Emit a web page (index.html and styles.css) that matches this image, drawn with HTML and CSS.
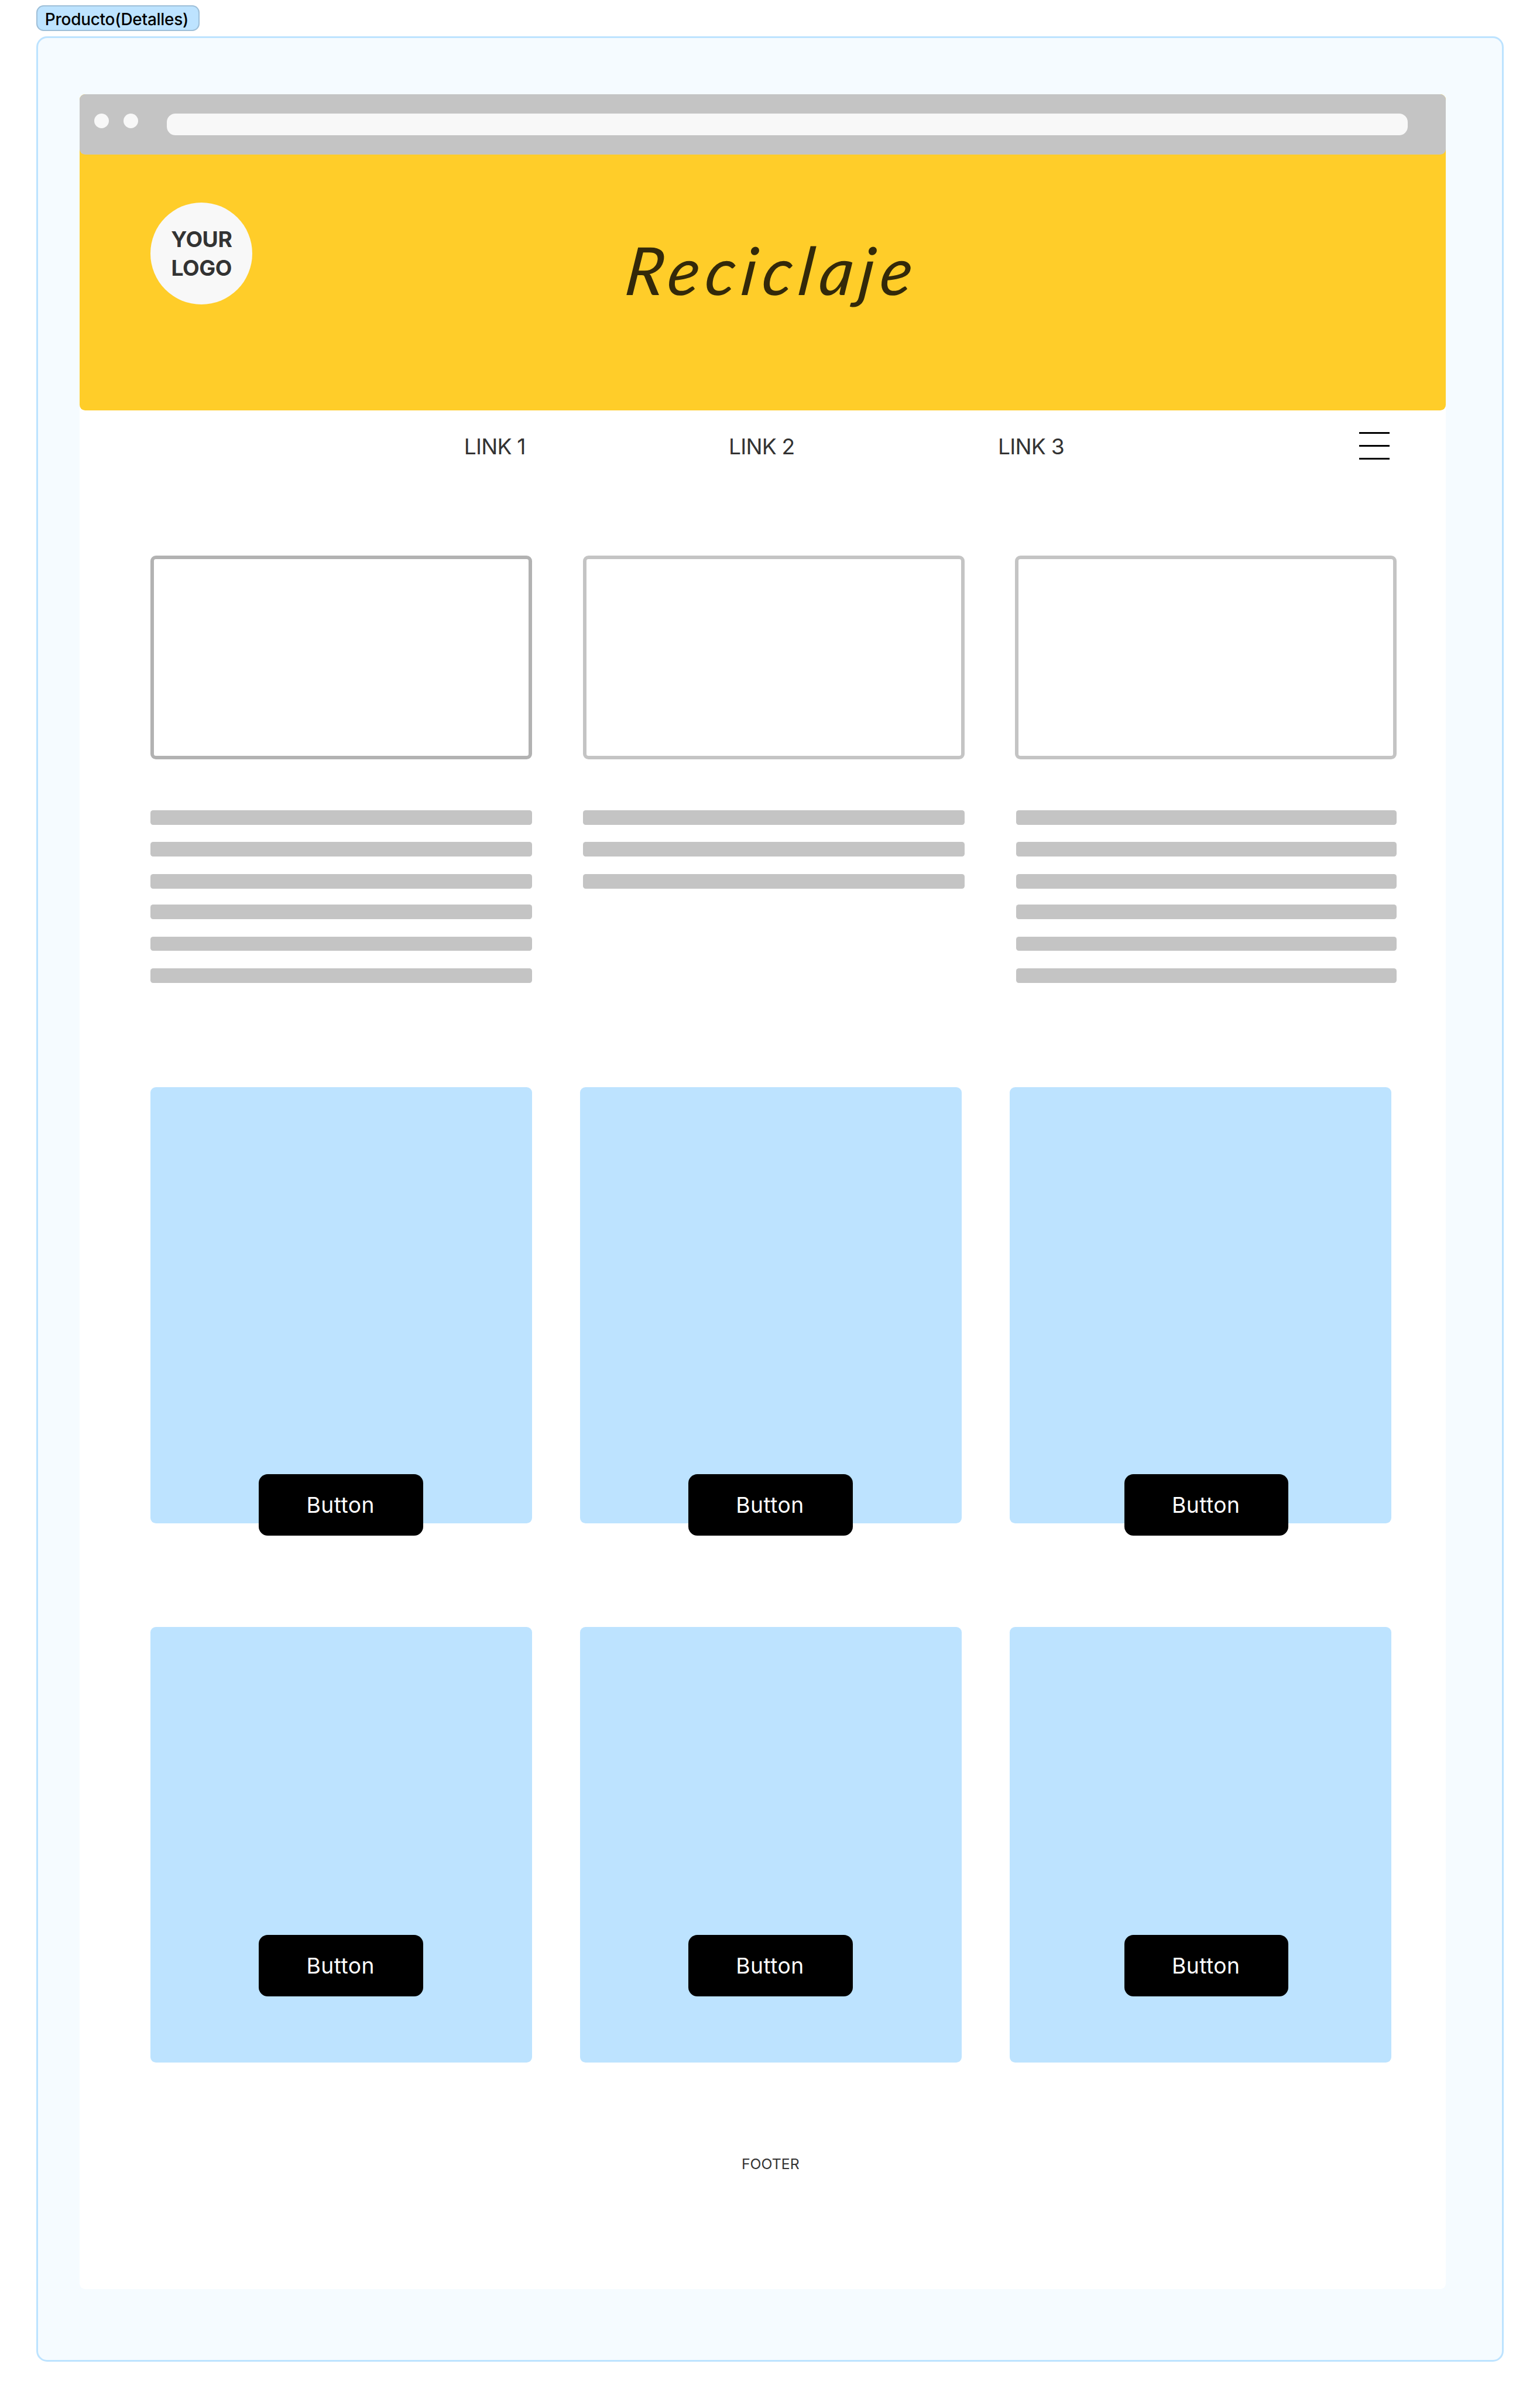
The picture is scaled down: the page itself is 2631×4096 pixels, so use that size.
FILE: index.html
```html
<!DOCTYPE html>
<html lang="es">
<head>
<meta charset="utf-8">
<title>Producto(Detalles)</title>
<link rel="stylesheet" href="styles.css">
</head>
<body>
<div class="tag">Producto(Detalles)</div>
<section class="board">
  <main class="browser">
    <header class="hero">
      <div class="chrome">
        <span class="dot"></span>
        <span class="dot"></span>
        <span class="address"></span>
      </div>
      <div class="banner">
        <div class="logo">YOUR<br>LOGO</div>
        <h1 class="title">Reciclaje</h1>
      </div>
    </header>
    <nav class="nav">
      <a class="link">LINK 1</a>
      <a class="link">LINK 2</a>
      <a class="link">LINK 3</a>
      <span class="burger"><i class="line"></i><i class="line"></i><i class="line"></i></span>
    </nav>
    <section class="details">
      <article class="detail">
        <div class="frame frame-dark"></div>
        <div class="bars"><i class="bar"></i><i class="bar"></i><i class="bar"></i></div>
        <div class="bars"><i class="bar"></i><i class="bar"></i><i class="bar"></i></div>
      </article>
      <article class="detail">
        <div class="frame"></div>
        <div class="bars"><i class="bar"></i><i class="bar"></i><i class="bar"></i></div>
      </article>
      <article class="detail">
        <div class="frame"></div>
        <div class="bars bars-inset"><i class="bar"></i><i class="bar"></i><i class="bar"></i></div>
        <div class="bars bars-inset"><i class="bar"></i><i class="bar"></i><i class="bar"></i></div>
      </article>
    </section>
    <section class="products">
      <article class="product product-low"><button class="button">Button</button></article>
      <article class="product product-low"><button class="button">Button</button></article>
      <article class="product product-low product-shift"><button class="button">Button</button></article>
      <article class="product"><button class="button">Button</button></article>
      <article class="product"><button class="button">Button</button></article>
      <article class="product product-shift"><button class="button">Button</button></article>
    </section>
    <footer class="footer">FOOTER</footer>
  </main>
</section>
</body>
</html>
```
FILE: styles.css
```css
/* 1rem is 100 units of the design canvas */
html {
  font-size: 77.575px;
}

* {
  box-sizing: border-box;
}

body {
  margin: 0;
  height: 100vh;
  padding: 0.12rem 0.8rem 0;
  overflow: hidden;
  background: #fff;
  color: #333;
  font-family: Inter, "Liberation Sans", sans-serif;
}

.tag {
  width: 3.6rem;
  height: 0.56rem;
  margin-bottom: 0.12rem;
  padding-left: 0.165rem;
  border: 2px solid #9ebfd8;
  border-radius: 0.16rem;
  background: #bde3ff;
  color: #000;
  font-size: 0.36rem;
  font-weight: 500;
  letter-spacing: -0.003rem;
  line-height: 0.57rem;
  white-space: nowrap;
}

.board {
  height: 51.2rem;
  padding: 1.24rem 1.24rem 0 0.92rem;
  border: 0.04rem solid #bde3ff;
  border-radius: 0.24rem;
  background: #f5fbff;
}

.browser {
  height: 48.32rem;
  border-radius: 0.12rem;
  background: #fff;
}

.hero {
  height: 6.96rem;
  border-radius: 0.12rem;
  background: #ffcd29;
}

.chrome {
  display: flex;
  height: 1.32rem;
  padding: 0.42rem 0.84rem 0 0.32rem;
  gap: 0.32rem;
  border-radius: 0.12rem;
  background: #c4c4c4;
}

.dot {
  width: 0.32rem;
  height: 0.32rem;
  border-radius: 50%;
  background: #f8f8f8;
}

.address {
  flex: 1;
  height: 0.48rem;
  margin-left: 0.32rem;
  border-radius: 0.19rem;
  background: #f8f8f8;
}

.banner {
  display: flex;
  padding: 1.06rem 0 0 1.56rem;
}

.logo {
  width: 2.24rem;
  height: 2.24rem;
  padding-top: 0.49rem;
  border-radius: 50%;
  background: #f8f8f8;
  font-size: 0.48rem;
  font-weight: 700;
  letter-spacing: -0.006rem;
  line-height: 0.64rem;
  text-align: center;
}

.title {
  margin: 0.58rem 0 0 8.24rem;
  color: #33290a;
  font-family: Lato, "Liberation Sans", sans-serif;
  font-size: 1.46rem;
  font-style: italic;
  font-weight: 400;
  letter-spacing: 0.13rem;
  line-height: 1.8rem;
  transform: skewX(-7deg);
}

.nav {
  display: grid;
  grid-template-columns: 5.83rem 5.93rem 7.95rem 0.68rem;
  height: 3.2rem;
  padding: 0.48rem 0 0 8.46rem;
}

.link {
  font-size: 0.48rem;
  font-weight: 400;
  letter-spacing: -0.01rem;
  line-height: 0.64rem;
  white-space: nowrap;
}

.burger {
  display: flex;
  flex-direction: column;
  gap: 0.24rem;
}

.line {
  height: 0.04rem;
  background: #000;
}

.details {
  display: grid;
  grid-template-columns: repeat(3, 8.4rem);
  gap: 1.12rem;
  height: 11.7rem;
  margin-left: 1.56rem;
  align-items: start;
}

.frame {
  height: 4.48rem;
  margin-bottom: 1.12rem;
  border: 0.08rem solid #c4c4c4;
  border-radius: 0.12rem;
  background: #fff;
}

.frame-dark {
  border-color: #b2b2b2;
}

.bars {
  display: flex;
  flex-direction: column;
  gap: 0.383rem;
  margin-bottom: 0.354rem;
}

.bars-inset {
  margin-left: 0.02rem;
}

.bar {
  height: 0.32rem;
  border-radius: 0.06rem;
  background: #c4c4c4;
}

.products {
  display: grid;
  grid-template-columns: repeat(3, 8.4rem);
  grid-auto-rows: 9.6rem;
  gap: 2.28rem 1.06rem;
  margin-left: 1.56rem;
}

.product {
  padding: 6.78rem 0 0 2.38rem;
  border-radius: 0.12rem;
  background: #bde3ff;
}

.product-low {
  height: 9.6rem;
  padding-top: 8.52rem;
}

.product-shift {
  padding-left: 2.52rem;
}

.button {
  display: block;
  width: 3.62rem;
  height: 1.36rem;
  padding: 0;
  border: 0;
  border-radius: 0.2rem;
  background: #000;
  color: #fff;
  font-family: inherit;
  font-size: 0.48rem;
  letter-spacing: 0.006rem;
  line-height: 1.33rem;
  text-indent: -0.02rem;
}

.footer {
  padding-top: 2.03rem;
  padding-left: 0.34rem;
  font-size: 0.32rem;
  line-height: 0.4rem;
  text-align: center;
}
```
